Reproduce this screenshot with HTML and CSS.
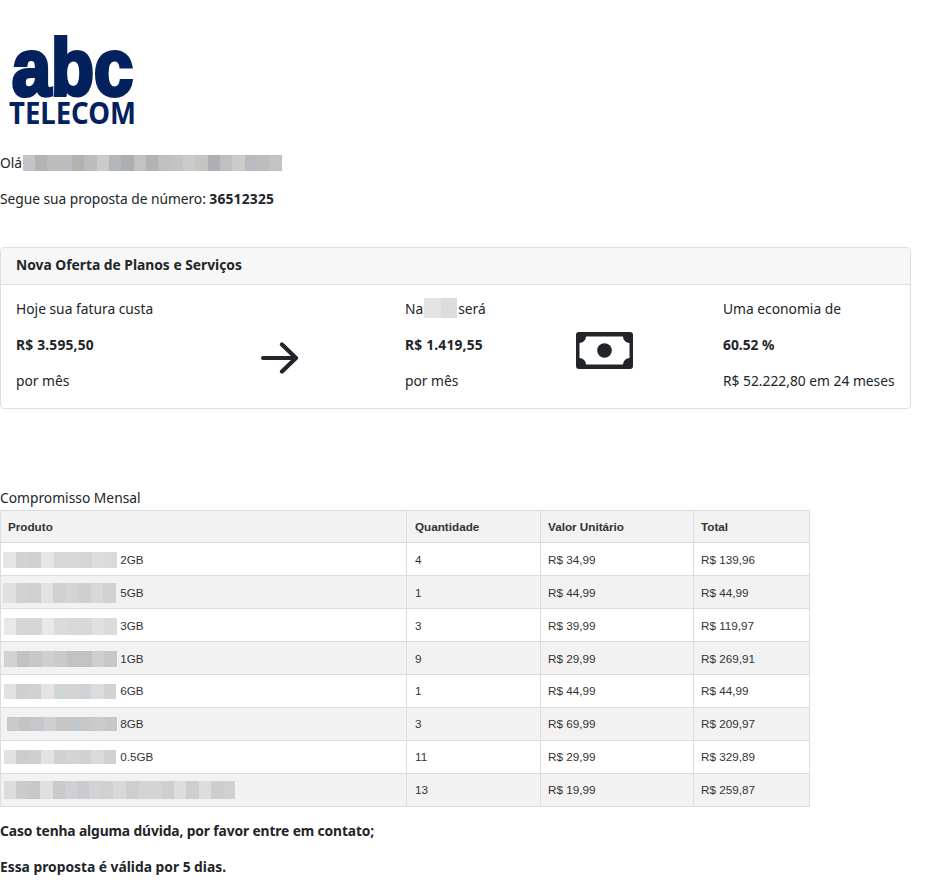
FILE: index.html
```html
<!DOCTYPE html>
<html lang="pt-BR">
<head>
<meta charset="utf-8">
<title>Proposta</title>
<link rel="stylesheet" href="styles.css">
</head>
<body>
<div class="logo">
<svg width="150" height="132" viewBox="0 0 150 132" class="logo-svg">
<text x="12" y="95" class="logo-abc" textLength="121" lengthAdjust="spacingAndGlyphs">abc</text>
<text x="9" y="124" class="logo-tel" textLength="127" lengthAdjust="spacingAndGlyphs">TELECOM</text>
</svg>
</div>
<p class="line greet">Olá<span class="blur blur-name"></span></p>
<p class="line segue">Segue sua proposta de número: <b class="num">36512325</b></p>
<section class="card">
<header class="card-head"><b>Nova Oferta de Planos e Serviços</b></header>
<div class="card-body">
<div class="col col-a">
<p>Hoje sua fatura custa</p>
<p><b class="num">R$ 3.595,50</b></p>
<p>por mês</p>
</div>
<div class="ico ico-arrow">
<svg width="38" height="32" viewBox="0 0 38 32" fill="none" stroke="#212529" stroke-width="4.2" stroke-linecap="round" stroke-linejoin="round"><path d="M2.100 16H35M21 2.500L35 16L21 29.500"/></svg>
</div>
<div class="col col-b">
<p>Na<span class="blur blur-op"></span>será</p>
<p><b class="num">R$ 1.419,55</b></p>
<p>por mês</p>
</div>
<div class="ico ico-money">
<svg width="57" height="37" viewBox="0 0 57 37"><path fill="#212529" fill-rule="evenodd" d="M3 0H54a3 3 0 0 1 3 3V34a3 3 0 0 1-3 3H3a3 3 0 0 1-3-3V3A3 3 0 0 1 3 0ZM10 4.500A6.500 6.500 0 0 1 3.500 11V26A6.500 6.500 0 0 1 10 32.500H47A6.500 6.500 0 0 1 53.500 26V11A6.500 6.500 0 0 1 47 4.500Z"/><circle cx="28.500" cy="18.500" r="7.300" fill="#212529"/></svg>
</div>
<div class="col col-c">
<p>Uma economia de</p>
<p><b>60.52 %</b></p>
<p>R$ 52.222,80 em 24 meses</p>
</div>
</div>
</section>
<p class="line commit">Compromisso Mensal</p>
<table class="plans">
<thead>
<tr><th class="c1">Produto</th><th class="c2">Quantidade</th><th class="c3">Valor Unitário</th><th class="c4">Total</th></tr>
</thead>
<tbody>
<tr><td><span class="blur r1"></span> 2GB</td><td>4</td><td>R$ 34,99</td><td>R$ 139,96</td></tr>
<tr><td><span class="blur r2"></span> 5GB</td><td>1</td><td>R$ 44,99</td><td>R$ 44,99</td></tr>
<tr><td><span class="blur r3"></span> 3GB</td><td>3</td><td>R$ 39,99</td><td>R$ 119,97</td></tr>
<tr><td><span class="blur r4"></span> 1GB</td><td>9</td><td>R$ 29,99</td><td>R$ 269,91</td></tr>
<tr><td><span class="blur r5"></span> 6GB</td><td>1</td><td>R$ 44,99</td><td>R$ 44,99</td></tr>
<tr><td><span class="blur r6"></span> 8GB</td><td>3</td><td>R$ 69,99</td><td>R$ 209,97</td></tr>
<tr><td><span class="blur r7"></span> 0.5GB</td><td>11</td><td>R$ 29,99</td><td>R$ 329,89</td></tr>
<tr><td><span class="blur r8"></span></td><td>13</td><td>R$ 19,99</td><td>R$ 259,87</td></tr>
</tbody>
</table>
<p class="line foot"><b class="tight">Caso tenha alguma dúvida, por favor entre em contato;</b></p>
<p class="line foot2"><b>Essa proposta é válida por 5 dias.</b></p>
</body>
</html>
```
FILE: styles.css
```css
html, body { margin: 0; padding: 0; background: #fff; }
body { font-family: "Noto Sans", "Open Sans", sans-serif; font-size: 13.8px; line-height: 21px; color: #212529; width: 943px; }
b { font-weight: 700; }
.num { letter-spacing: 0.2px; }
.tight { letter-spacing: -0.12px; }
p { margin: 0; }
.logo { height: 128px; overflow: visible; }
.logo-svg { display: block; overflow: visible; }
.logo-abc { font-family: "Liberation Sans", sans-serif; font-weight: 700; font-size: 80px; fill: #03215c; stroke: #03215c; stroke-width: 4px; }
.logo-tel { font-family: "Noto Sans", sans-serif; font-weight: 700; font-size: 30px; fill: #03215c; }
.line { height: 21px; }
.greet { margin-top: 24px; display: flex; align-items: center; }
.segue { margin-top: 15px; letter-spacing: -0.05px; }
.segue .num { letter-spacing: 0.2px; }
.blur { display: inline-block; vertical-align: middle; }
.blur-name { width: 259px; height: 16px; margin-left: 1px; background-image: linear-gradient(90deg, #c4c4c4 0 12px, #b3b3b1 12px 24px, #bcbcbc 24px 37px, #b9bcc0 37px 49px, #b3b2ae 49px 61px, #bcbcbe 61px 74px, #cbcbcb 74px 86px, #b3b7b9 86px 98px, #abafb2 98px 111px, #c2c2c2 111px 123px, #b2b3b5 123px 135px, #bfc0c2 135px 148px, #c2c3c4 148px 160px, #cacbcd 160px 172px, #c6c5c1 172px 185px, #aeb0b4 185px 197px, #bfc0c2 197px 209px, #cdccc8 209px 222px, #b9bbc0 222px 234px, #bcbdbf 234px 246px, #c3c3c4 246px 259px); }
.blur-op { width: 33px; height: 20px; margin: 0 1px 0 1px; vertical-align: top; background-image: linear-gradient(90deg, #e3e3e3 0 17px, #dcdcdc 17px 33px); }
.card { margin-top: 38px; width: 909px; height: 160px; border: 1px solid #dfdfdf; border-radius: 4px; overflow: hidden; }
.card-head { height: 36px; line-height: 34px; padding-left: 15px; background: #f7f7f7; border-bottom: 1px solid #dfdfdf; }
.card-body { display: flex; padding: 13px 15px 0; height: 110px; }
.col, .ico { flex: none; }
.col p { margin-bottom: 15px; white-space: nowrap; }
.col-a { width: 234px; }
.col-b { width: 162px; }
.col-c { width: 172px; }
.ico { display: flex; align-items: center; box-sizing: border-box; }
.ico-arrow { width: 155px; padding: 10px 0 0 11px; }
.ico-money { width: 156px; padding: 0 0 6px 9px; }
.commit { margin-top: 78px; }
.plans { margin-top: 2px; width: 810px; border-collapse: collapse; table-layout: fixed; font-family: "Liberation Sans", sans-serif; font-size: 11.7px; color: #333; }
.plans th, .plans td { border: 1px solid #ddd; height: 33px; padding: 0 7px; text-align: left; box-sizing: border-box; white-space: nowrap; }
.plans th { height: 32px; background: #f2f2f2; font-weight: 700; }
.plans tbody tr:nth-child(even) td { background: #f2f2f2; }
.plans td:first-child { padding: 0 2px; }
.plans td:nth-child(2), .plans th:nth-child(2) { padding-left: 8px; }
.plans tbody tr:nth-child(n+5) td { padding-bottom: 2px; }
.plans .blur { margin-top: -6px; margin-bottom: -6px; }
.c1 { width: 406px; }
.c2 { width: 134px; }
.c3 { width: 153px; }
.c4 { width: 116px; }
.r1 { width: 114px; height: 16px; background-image: linear-gradient(90deg, #e6e6e6 0 13px, #d3d3d3 13px 25px, #cfd1d3 25px 38px, #e6e7e5 38px 51px, #d5d7da 51px 63px, #d8d6d6 63px 76px, #d2d6d9 76px 89px, #dddeda 89px 101px, #d9dadb 101px 114px); }
.r2 { width: 114px; height: 20px; background-image: linear-gradient(90deg, #e0e0e0 0 13px, #d2d2d2 13px 25px, #cfd0d2 25px 38px, #e2e3e0 38px 50px, #d0d1d3 50px 63px, #d4d4d4 63px 75px, #cecfcf 75px 88px, #d8d8d8 88px 100px, #d2d2d2 100px 113px, transparent 113px); }
.r3 { width: 113px; height: 17px; margin-left: 1px; background-image: linear-gradient(90deg, #e8e8e6 0 12px, #d6d6d6 12px 25px, #d4d5d8 25px 38px, #e8e8e6 38px 50px, #dadcdc 50px 63px, #d8d9da 63px 75px, #d6d8da 75px 88px, #dfe0df 88px 100px, #dadbdb 100px 113px); }
.r4 { width: 113px; height: 16px; margin-left: 1px; background-image: linear-gradient(90deg, #d2d2d2 0 13px, #c2c2c2 13px 25px, #c8c8c8 25px 38px, #d0cece 38px 50px, #c8cacc 50px 63px, #c2c2c4 63px 88px, #cecece 88px 100px, #c8c8c8 100px 113px); }
.r5 { width: 112px; height: 15px; margin-left: 1px; margin-right: 1px; background-image: linear-gradient(90deg, #e2e2e0 0 12px, #cfcfcf 12px 25px, #d1d1d1 25px 37px, #e4e3e0 37px 50px, #d0d6d6 50px 62px, #d4d4d2 62px 75px, #d0d3d5 75px 87px, #dcdcdc 87px 100px, #d2d4d4 100px 112px); }
.r6 { width: 110px; height: 14px; margin-left: 4px; background-image: linear-gradient(90deg, #c9c9c7 0 12px, #c3c5c3 12px 24px, #c6c8cb 24px 37px, #cecfce 37px 49px, #c8c5c2 49px 61px, #c2c7cb 61px 74px, #c6c8ca 74px 86px, #cbcbcb 86px 98px, #c7c7c8 98px 110px); }
.r7 { width: 112px; height: 14px; margin-left: 1px; margin-right: 1px; background-image: linear-gradient(90deg, #e2e2e0 0 12px, #cdcdcd 12px 25px, #cfcfcf 25px 37px, #e3e2e0 37px 50px, #d0d1d3 50px 62px, #d4d4d4 62px 75px, #d0d1d2 75px 87px, #dadbd9 87px 100px, #d0d1d2 100px 112px); }
.r8 { width: 231px; height: 18px; margin-left: 1px; background-image: linear-gradient(90deg, #dcdedc 0 12px, #cbcbcb 12px 24px, #c8c8c6 24px 36px, #dfe0df 36px 49px, #c9cacb 49px 61px, #cfd0d2 61px 73px, #cbcbcd 73px 85px, #d2d3d5 85px 97px, #d1d1d1 97px 109px, #d8d9db 109px 122px, #cecece 122px 134px, #d4d4d4 134px 158px, #cfd0ce 158px 170px, #dddddc 170px 182px, #cecece 182px 195px, #dddedc 195px 207px, #cdcdcd 207px 219px, #d0d0d2 219px 231px); }
.foot { margin-top: 13px; }
.foot2 { margin-top: 15px; }
```
